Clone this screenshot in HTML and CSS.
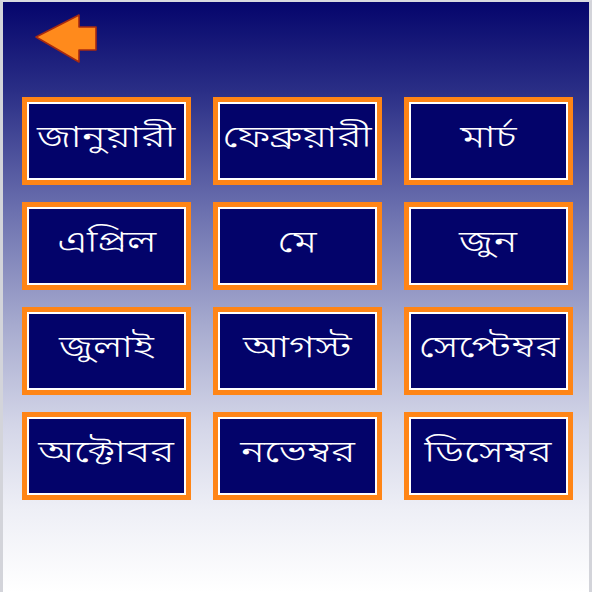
FILE: index.html
```html
<!DOCTYPE html>
<html lang="bn">
<head>
<meta charset="utf-8">
<link rel="stylesheet" href="styles.css">
</head>
<body>
<div class="screen">
  <header class="top">
    <svg class="back" width="64" height="52" viewBox="0 0 64 52">
      <polygon points="2,23 45,1 45,13 62,13 62,36 45,36 45,48" fill="#ff8a1c" stroke="#a82a10" stroke-width="1.6" stroke-linejoin="round"/>
    </svg>
  </header>
  <main class="grid">
    <div class="month"><span class="box"><span class="label">জানুয়ারী</span></span></div>
    <div class="month"><span class="box"><span class="label">ফেব্রুয়ারী</span></span></div>
    <div class="month"><span class="box"><span class="label">মার্চ</span></span></div>
    <div class="month"><span class="box"><span class="label">এপ্রিল</span></span></div>
    <div class="month"><span class="box"><span class="label">মে</span></span></div>
    <div class="month"><span class="box"><span class="label">জুন</span></span></div>
    <div class="month"><span class="box"><span class="label">জুলাই</span></span></div>
    <div class="month"><span class="box"><span class="label">আগস্ট</span></span></div>
    <div class="month"><span class="box"><span class="label">সেপ্টেম্বর</span></span></div>
    <div class="month"><span class="box"><span class="label">অক্টোবর</span></span></div>
    <div class="month"><span class="box"><span class="label">নভেম্বর</span></span></div>
    <div class="month"><span class="box"><span class="label">ডিসেম্বর</span></span></div>
  </main>
</div>
</body>
</html>
```
FILE: styles.css
```css
html, body {
  margin: 0;
  padding: 0;
}
body {
  width: 592px;
  height: 592px;
  overflow: hidden;
}
.screen {
  box-sizing: border-box;
  width: 592px;
  height: 592px;
  border-left: 3px solid #d3d4da;
  border-right: 3px solid #d3d4da;
  border-top: 2px solid #d8d9e0;
  background: linear-gradient(to bottom, #05056c 0%, #2a2e86 15%, #6a6fae 35%, #a7abcf 55%, #d4d6e8 72%, #eeeff6 86%, #ffffff 100%);
  font-family: "Noto Sans Bengali", "Noto Serif Bengali", "Lohit Bengali", "FreeSans", "Noto Sans", sans-serif;
}
.top {
  height: 95px;
  display: flex;
  align-items: flex-start;
}
.back {
  display: block;
  margin-top: 12px;
  margin-left: 31px;
}
.grid {
  display: grid;
  grid-template-columns: repeat(3, 169px);
  grid-auto-rows: 88px;
  column-gap: 22px;
  row-gap: 17px;
  padding-left: 19px;
}
.month {
  box-sizing: border-box;
  border: 5px solid #ff8516;
  background: #ffffff;
  padding: 2px;
  display: flex;
}
.box {
  flex: 1;
  background: #03036a;
  color: #ffffff;
  display: flex;
  align-items: center;
  justify-content: center;
  overflow: hidden;
}
.label {
  display: inline-block;
  font-size: 30px;
  font-weight: 300;
  white-space: nowrap;
  transform: scaleX(1.38);
  margin-bottom: 4px;
}
```
